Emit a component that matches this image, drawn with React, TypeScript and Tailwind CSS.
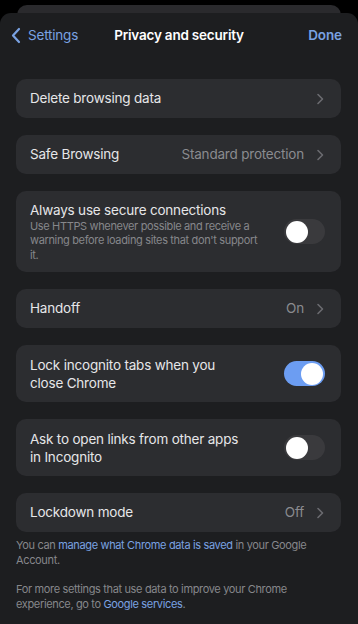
import React from "react";

const Chevron = () => (
  <svg width="8" height="12" viewBox="0 0 8 12" fill="none" className="shrink-0">
    <path d="M2 1.5 L6.5 6 L2 10.5" stroke="#6b6b70" strokeWidth="1.6" strokeLinecap="round" strokeLinejoin="round" />
  </svg>
);

const Toggle = ({ on }: { on: boolean }) => (
  <div
    className={`w-[41px] h-[25px] rounded-full shrink-0 flex items-center px-[2px] ${
      on ? "bg-[#6c9df2] justify-end" : "bg-[#3a3a3d] justify-start"
    }`}
  >
    <div className="w-[22px] h-[22px] rounded-full bg-white" />
  </div>
);

const NavRow = ({ label, value }: { label: string; value?: string }) => (
  <div className="h-[39px] rounded-[10px] bg-[#2c2d30] flex items-center pl-[14px] pr-[17px]">
    <span className="flex-1 text-[13.5px] tracking-[-0.2px] text-[#e6e6e8]">{label}</span>
    {value && <span className="text-[13.5px] tracking-[-0.2px] text-[#8a8b8f] mr-[12px]">{value}</span>}
    <Chevron />
  </div>
);

const ToggleRow = ({ lines, on }: { lines: string[]; on: boolean }) => (
  <div className="h-[57px] rounded-[10px] bg-[#2c2d30] flex items-center pl-[14px] pr-[16px]">
    <div className="flex-1 text-[13.5px] tracking-[-0.2px] leading-[18px] text-[#e6e6e8]">
      {lines.map((l) => (
        <div key={l}>{l}</div>
      ))}
    </div>
    <Toggle on={on} />
  </div>
);

export default function App() {
  return (
    <div
      className="w-[358px] h-[624px] bg-black overflow-hidden relative"
      style={{ fontFamily: "Inter, 'Noto Sans', sans-serif" }}
    >
      <div className="h-[5px]" />
      <div className="mx-[17px] h-[20px] rounded-t-[10px] bg-[#2a2a2d]" />
      <div className="absolute left-0 right-0 top-[13px] bottom-0 rounded-t-[11px] bg-[#1d1e20]">
        <div className="h-[45px] flex items-center px-[10px] relative">
          <div className="flex items-center text-[#7aa2e2] text-[13.5px] tracking-[-0.2px]">
            <svg width="12" height="17" viewBox="0 0 12 17" fill="none" className="mr-[6px]">
              <path d="M9 2 L3 8.5 L9 15" stroke="#7aa2e2" strokeWidth="2.2" strokeLinecap="round" strokeLinejoin="round" />
            </svg>
            <span>Settings</span>
          </div>
          <div className="absolute left-0 right-0 text-center text-[13.5px] tracking-[-0.2px] font-semibold text-white pointer-events-none">
            Privacy and security
          </div>
          <div className="ml-auto mr-[6px] text-[13.5px] tracking-[-0.1px] font-semibold text-[#7aa2e2]">Done</div>
        </div>
        <div className="px-[16px] pr-[17px] pt-[21px] flex flex-col gap-[17px]">
          <NavRow label="Delete browsing data" />
          <NavRow label="Safe Browsing" value="Standard protection" />
          <div className="h-[81px] rounded-[10px] bg-[#2c2d30] flex items-center pl-[14px] pr-[16px]">
            <div className="flex-1 pr-[20px]">
              <div className="text-[13.5px] tracking-[-0.2px] leading-[18px] text-[#e6e6e8]">Always use secure connections</div>
              <div className="text-[11px] tracking-[-0.35px] leading-[14.5px] text-[#86878b]">
                Use HTTPS whenever possible and receive a warning before loading sites that don't support it.
              </div>
            </div>
            <Toggle on={false} />
          </div>
          <NavRow label="Handoff" value="On" />
          <ToggleRow lines={["Lock incognito tabs when you", "close Chrome"]} on={true} />
          <ToggleRow lines={["Ask to open links from other apps", "in Incognito"]} on={false} />
          <div className="flex flex-col">
            <NavRow label="Lockdown mode" value="Off" />
            <div className="pt-[6px] text-[11px] tracking-[-0.35px] leading-[15px] text-[#86878b]">
              You can <span className="text-[#7aa2e2]">manage what Chrome data is saved</span> in your Google Account.
            </div>
            <div className="pt-[14px] text-[11px] tracking-[-0.35px] leading-[15px] text-[#86878b]">
              For more settings that use data to improve your Chrome experience, go to{" "}
              <span className="text-[#7aa2e2]">Google services</span>.
            </div>
          </div>
        </div>
      </div>
    </div>
  );
}
